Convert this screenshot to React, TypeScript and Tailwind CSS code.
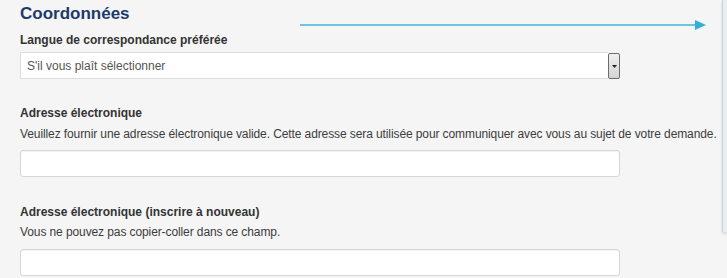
const font = { fontFamily: '"Liberation Sans", Arial, sans-serif' };

function Label({ children, className = "" }: { children: React.ReactNode; className?: string }) {
  return (
    <div className={`text-[12px] leading-[16px] font-bold text-[#333] ${className}`}>{children}</div>
  );
}

function Help({ children, className = "" }: { children: React.ReactNode; className?: string }) {
  return (
    <div className={`text-[12px] leading-[16px] tracking-[-0.1px] text-[#3c3c3c] whitespace-nowrap ${className}`}>
      {children}
    </div>
  );
}

function TextInput({ className = "" }: { className?: string }) {
  return (
    <div
      className={`w-[600px] h-[27px] bg-white border border-[#d6d6d6] rounded-[3px] shadow-[inset_0_1px_1px_rgba(0,0,0,0.05)] ${className}`}
    />
  );
}

export default function App() {
  return (
    <div className="w-[727px] h-[278px] overflow-hidden bg-[#f5f5f5] flex" style={font}>
      <div className="flex-1 pl-[20px]">
        {/* heading + arrow */}
        <div className="flex items-start h-[30px]">
          <h2 className="w-[280px] text-[17px] leading-[28px] font-bold text-[#1c3b6a]">Coordonnées</h2>
          <div className="mt-[20px] h-[10px] flex items-center">
            <div className="w-[395px] h-[1.5px] bg-[#6ec6de]" />
            <svg width="11" height="10" viewBox="0 0 11 10" className="block">
              <path d="M0 0 L11 5 L0 10 Z" fill="#2fb0d8" />
            </svg>
          </div>
        </div>

        <Label className="mt-[2px]">Langue de correspondance préférée</Label>
        <div className="mt-[4px] w-[600px] h-[27px] flex">
          <div className="flex-1 bg-white border border-[#dcdcdc] border-r-0 flex items-center pl-[6px] text-[12px] text-[#555]">
            S'il vous plaît sélectionner
          </div>
          <div className="w-[12px] h-[26px] mt-[1px] rounded-[2px] border border-[#6b6b6b] bg-gradient-to-b from-[#f0f0f0] to-[#d4d4d4] flex items-center justify-center">
            <svg width="5" height="3" viewBox="0 0 5 3" className="block">
              <path d="M0 0 L5 0 L2.5 3 Z" fill="#222" />
            </svg>
          </div>
        </div>

        <Label className="mt-[26px]">Adresse électronique</Label>
        <Help className="mt-[5px]">
          Veuillez fournir une adresse électronique valide. Cette adresse sera utilisée pour communiquer avec vous au sujet de votre demande.
        </Help>
        <TextInput className="mt-[8px]" />

        <Label className="mt-[27px]">Adresse électronique (inscrire à nouveau)</Label>
        <Help className="mt-[4px]">Vous ne pouvez pas copier-coller dans ce champ.</Help>
        <TextInput className="mt-[9px]" />
      </div>
      <div className="w-[5px] h-[232px] bg-[#e9eef1] border-l border-[#c9d3d9] shadow-[0_2px_3px_rgba(0,0,0,0.12)]" />
    </div>
  );
}
